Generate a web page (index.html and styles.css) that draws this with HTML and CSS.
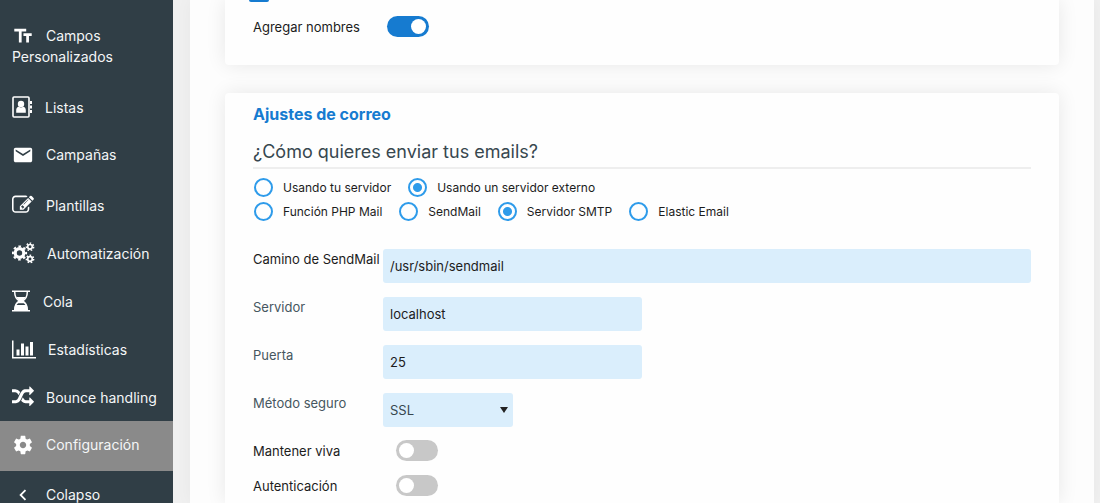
FILE: index.html
```html
<!DOCTYPE html>
<html lang="es">

<head>
    <meta charset="utf-8">
    <title>Configuración</title>
    <link rel="stylesheet" href="styles.css">
</head>

<body>
    <nav class="sidebar">
        <a href="#" class="item wrap">
            <svg class="icon" width="22" height="22" viewBox="0 0 24 24"><path d="M2.5 4v3h5v12h3V7h5V4h-13zm19 5h-9v3h3v7h3v-7h3V9z"/></svg>
            Campos Personalizados
        </a>
        <a href="#" class="item">
            <svg class="icon" width="21" height="22" viewBox="0 0 21 22"><rect x="1" y="1" width="16" height="20" rx="1" fill="none" stroke="#fff" stroke-width="1.6"/><path d="M18 5h2v3h-2zM18 9.500h2v3h-2zM18 14h2v3h-2z"/><circle cx="9" cy="8" r="3.200"/><path d="M4.200 16.800V14c0-2 1.200-3.300 2.600-3.300 1.300 1 3.100 1 4.400 0 1.400 0 2.600 1.300 2.600 3.300v2.800z"/></svg>
            Listas
        </a>
        <a href="#" class="item tall">
            <svg class="icon" width="22" height="22" viewBox="0 0 24 24"><path d="M20 4H4c-1.100 0-1.990.9-1.990 2L2 18c0 1.100.9 2 2 2h16c1.100 0 2-.9 2-2V6c0-1.100-.9-2-2-2zm0 4l-8 5-8-5V6l8 5 8-5v2z"/></svg>
            Campañas
        </a>
        <a href="#" class="item">
            <svg class="icon" width="22" height="22" viewBox="0 0 1792 1792"><path d="M888 1184l116-116-152-152-116 116v56h96v96h56zm440-720q-16-16-33 1l-350 350q-17 17-1 33t33-1l350-350q17-17 1-33zm80 594v190q0 119-84.500 203.500t-203.500 84.500h-832q-119 0-203.500-84.500t-84.500-203.500v-832q0-119 84.500-203.500t203.500-84.500h832q63 0 117 25 15 7 18 23 3 17-9 29l-49 49q-14 14-32 8-23-6-45-6h-832q-66 0-113 47t-47 113v832q0 66 47 113t113 47h832q66 0 113-47t47-113v-126q0-13 9-22l64-64q15-15 35-7t20 29zm-96-738l288 288-672 672h-288v-288zm444 132l-92 92-288-288 92-92q28-28 68-28t68 28l152 152q28 28 28 68t-28 68z"/></svg>
            Plantillas
        </a>
        <a href="#" class="item">
            <svg class="icon" width="23" height="22" viewBox="0 0 23 22"><g fill="none" stroke="#fff"><circle cx="7.500" cy="11" r="4.300" stroke-width="3.200"/><circle cx="7.500" cy="11" r="6.600" stroke-width="2" stroke-dasharray="2.600 2.584" stroke-dashoffset="1.300"/><circle cx="18" cy="4.800" r="2.300" stroke-width="1.700"/><circle cx="18" cy="4.800" r="3.700" stroke-width="1.400" stroke-dasharray="1.600 1.720"/><circle cx="18" cy="17" r="2.300" stroke-width="1.700"/><circle cx="18" cy="17" r="3.700" stroke-width="1.400" stroke-dasharray="1.600 1.720"/></g></svg>
            Automatización
        </a>
        <a href="#" class="item">
            <svg class="icon" width="19" height="22" viewBox="0 0 19 22"><path d="M0 .5h18V2H0zM0 20h18v1.500H0z"/><path d="M2.700 2c0 5 2 7.500 5 9-3 1.500-5 4-5 9M15.300 2c0 5-2 7.500-5 9 3 1.500 5 4 5 9" fill="none" stroke="#fff" stroke-width="1.500"/><path d="M4.500 7h9c-.8 1.800-2 3-3.200 4 1 .7 1.800 1.200 2.400 2.200H5.300c.6-1 1.400-1.500 2.400-2.200C6.500 10 5.300 8.800 4.500 7zM3 20v-2.500l1-2.500h10l1 2.500V20z"/></svg>
            Cola
        </a>
        <a href="#" class="item">
            <svg class="icon" width="24" height="21" viewBox="0 0 2048 1792"><path d="M640 896v512h-256v-512h256zm384-512v1024h-256v-1024h256zm1024 1152v128h-2048v-1536h128v1408h1920zm-640-896v768h-256v-768h256zm384-384v1152h-256v-1152h256z"/></svg>
            Estadísticas
        </a>
        <a href="#" class="item">
            <svg class="icon" width="22" height="22" viewBox="0 0 1792 1792"><path d="M666 481q-60 92-137 273-22-45-37-72.500t-40.500-63.500-51-56.500-63-35-81.500-14.500h-224q-14 0-23-9t-9-23v-192q0-14 9-23t23-9h224q250 0 410 225zm1126 799q0 14-9 23l-320 320q-9 9-23 9-13 0-22.500-9.500t-9.500-22.500v-192q-32 0-85 .5t-81 1-73-1-71-5-64-10.500-63-18.500-58-28.500-59-40-55-53.500-56-69.500q59-93 136-273 22 45 37 72.500t40.500 63.500 51 56.500 63 35 81.500 14.500h256v-192q0-14 9-23t23-9q12 0 24 10l319 319q9 9 9 23zm0-896q0 14-9 23l-320 320q-9 9-23 9-13 0-22.500-9.500t-9.500-22.500v-192h-256q-48 0-87 15t-69 45-51 61.500-45 77.500q-32 62-78 171-29 66-49.500 111t-54 105-64 100-74 83-90 68.500-106.500 42-128 16.500h-224q-14 0-23-9t-9-23v-192q0-14 9-23t23-9h224q48 0 87-15t69-45 51-61.500 45-77.500q32-62 78-171 29-66 49.500-111t54-105 64-100 74-83 90-68.500 106.500-42 128-16.500h256v-192q0-14 9-23t23-9q12 0 24 10l319 319q9 9 9 23z"/></svg>
            Bounce handling
        </a>
        <a href="#" class="item tall active">
            <svg class="icon" width="22" height="22" viewBox="0 0 24 24"><path d="M19.430 12.980c.04-.32.07-.64.07-.98s-.03-.66-.07-.98l2.110-1.650c.19-.15.24-.42.12-.64l-2-3.460c-.12-.22-.39-.3-.61-.22l-2.490 1c-.52-.4-1.080-.73-1.690-.98l-.38-2.650C14.460 2.180 14.250 2 14 2h-4c-.25 0-.46.18-.49.42l-.38 2.650c-.61.25-1.170.59-1.690.98l-2.490-1c-.23-.09-.49 0-.61.22l-2 3.460c-.13.22-.07.49.12.64l2.110 1.650c-.04.32-.07.65-.07.98s.03.66.07.98l-2.110 1.650c-.19.15-.24.42-.12.64l2 3.460c.12.22.39.3.61.22l2.490-1c.52.4 1.080.73 1.690.98l.38 2.650c.03.24.24.42.49.42h4c.25 0 .46-.18.49-.42l.38-2.650c.61-.25 1.170-.59 1.690-.98l2.490 1c.23.09.49 0 .61-.22l2-3.460c.12-.22.07-.49-.12-.64l-2.110-1.650zM12 15.500c-1.930 0-3.500-1.570-3.500-3.500s1.570-3.500 3.500-3.500 3.500 1.570 3.500 3.500-1.570 3.500-3.500 3.500z"/></svg>
            Configuración
        </a>
        <a href="#" class="item tall">
            <svg class="icon" width="22" height="22" viewBox="0 0 24 24"><path d="M15.410 7.410L14 6l-6 6 6 6 1.410-1.410L10.830 12z"/></svg>
            Colapso
        </a>
    </nav>

    <main class="content">
        <section class="card first">
            <div class="strip"></div>
            <div class="row names">
                <label for="addNames">Agregar nombres</label>
                <input type="checkbox" class="switch" id="addNames" checked>
            </div>
        </section>

        <section class="card">
            <h2>Ajustes de correo</h2>
            <h3>¿Cómo quieres enviar tus emails?</h3>
            <div class="radios">
                <label><input type="radio" name="where">Usando tu servidor</label>
                <label><input type="radio" name="where" checked>Usando un servidor externo</label>
            </div>
            <div class="radios">
                <label><input type="radio" name="how">Función PHP Mail</label>
                <label><input type="radio" name="how">SendMail</label>
                <label><input type="radio" name="how" checked>Servidor SMTP</label>
                <label><input type="radio" name="how">Elastic Email</label>
            </div>

            <div class="fields">
                <label for="path">Camino de SendMail</label>
                <input type="text" class="box" id="path" value="/usr/sbin/sendmail">

                <label for="server" class="soft">Servidor</label>
                <input type="text" class="box medium" id="server" value="localhost">

                <label for="port" class="soft">Puerta</label>
                <input type="text" class="box medium" id="port" value="25">

                <label for="secure" class="soft">Método seguro</label>
                <select class="box small" id="secure">
                    <option>SSL</option>
                    <option>TLS</option>
                </select>
            </div>

            <div class="row">
                <label for="alive">Mantener viva</label>
                <input type="checkbox" class="switch" id="alive">
            </div>
            <div class="row">
                <label for="auth">Autenticación</label>
                <input type="checkbox" class="switch" id="auth">
            </div>
        </section>
    </main>
</body>

</html>
```
FILE: styles.css
```css
* {
    box-sizing: border-box;
}

body {
    margin: 0;
    height: 100vh;
    overflow: hidden;
    display: flex;
    background-color: #f0f0f0;
    font-family: Inter, "Open Sans", sans-serif;
    font-size: 13px;
    color: #1c1c1c;
}

.sidebar {
    width: 173px;
    flex-shrink: 0;
    background-color: #303e46;
}

.item {
    display: flex;
    align-items: center;
    gap: 12px;
    height: 48px;
    padding: 0 12px;
    color: #f4f6f7;
    font-size: 14px;
    line-height: 21px;
    text-decoration: none;
    white-space: nowrap;
}

.tall {
    height: 50px;
    padding-bottom: 3px;
}

.wrap {
    display: block;
    height: auto;
    padding: 25px 12px 16px;
    white-space: normal;
}

.wrap .icon {
    margin: -4px 8px -2px 0;
    vertical-align: middle;
}

.active {
    background-color: #8a8a8a;
}

.icon {
    flex-shrink: 0;
    fill: #fff;
}

.content {
    flex: 1;
    display: flex;
    flex-direction: column;
    margin: 0 6px 0 17px;
    padding: 0 35px;
    background-color: #fdfdfd;
    box-shadow: 0 0 16px rgba(0, 0, 0, 0.04);
}

.card {
    flex: 1;
    padding: 11px 28px 0;
    background-color: #fefefe;
    border-radius: 4px 4px 0 0;
    box-shadow: 0 0 20px rgba(0, 0, 0, 0.09);
}

.first {
    flex: none;
    margin-bottom: 28px;
    padding: 0 28px 21px;
    border-radius: 0 0 4px 4px;
}

.strip {
    width: 20px;
    height: 2px;
    margin-left: -4px;
    background-color: #167bd0;
    border-radius: 0 0 2px 2px;
}

h2 {
    margin: 0;
    color: #167bd0;
    font-size: 16px;
    line-height: 20px;
}

h3 {
    margin: 16px 0 6px;
    padding-bottom: 3px;
    border-bottom: 2px solid #eee;
    color: #37474f;
    font-size: 18px;
    font-weight: 400;
    line-height: 24px;
}

.radios {
    display: flex;
    gap: 17px;
    height: 24px;
    padding-left: 1px;
    font-size: 12px;
}

.radios label {
    display: flex;
    align-items: center;
    gap: 10px;
}

.radios input {
    appearance: none;
    width: 19px;
    height: 19px;
    margin: 0;
    border: 2px solid #2e9bea;
    border-radius: 50%;
}

.radios input:checked {
    background: radial-gradient(circle, #2e9bea 4px, transparent 5px);
}

.fields {
    display: grid;
    grid-template-columns: 130px 1fr;
    row-gap: 14px;
    margin: 26px 0 6px;
}

.fields label {
    line-height: 20px;
}

.soft {
    color: #465660;
}

.box {
    width: 100%;
    height: 34px;
    padding: 0 7px;
    border: none;
    border-radius: 3px;
    background-color: #daeefc;
    color: #1c1c1c;
    font-family: inherit;
    font-size: 13px;
}

.medium {
    width: 40%;
}

.small {
    width: 20%;
    appearance: none;
    color: #37474f;
    background-image: url("data:image/svg+xml,%3Csvg xmlns='http://www.w3.org/2000/svg' width='8' height='6'%3E%3Cpath d='M0 0h8L4 6z' fill='%23222'/%3E%3C/svg%3E");
    background-repeat: no-repeat;
    background-position: right 5px center;
}

.row {
    display: flex;
    align-items: center;
    height: 35px;
}

.row label {
    width: 143px;
}

.names {
    height: 42px;
    padding-top: 7px;
}

.names label {
    width: 134px;
}

.switch {
    appearance: none;
    width: 42px;
    height: 21px;
    margin: 0;
    padding: 3px;
    border-radius: 11px;
    background-color: #c8c8c8;
}

.switch::before {
    content: "";
    display: block;
    width: 15px;
    height: 15px;
    border-radius: 50%;
    background-color: #fff;
}

.switch:checked {
    background-color: #167bd0;
}

.switch:checked::before {
    margin-left: auto;
}
```
